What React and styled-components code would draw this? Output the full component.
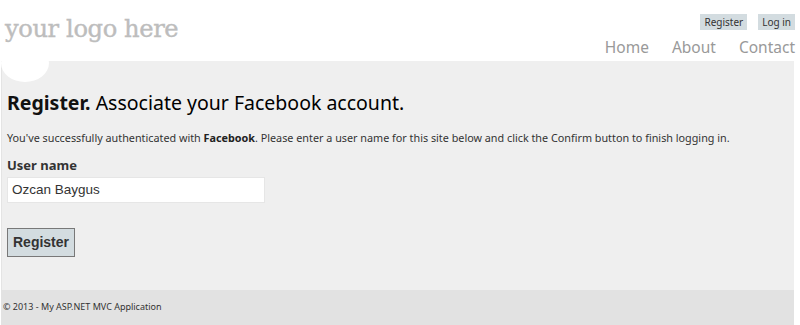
import styled, { createGlobalStyle } from "styled-components";

const GlobalStyle = createGlobalStyle`
  html, body {
    margin: 0;
    padding: 0;
    background: #fff;
  }
  body {
    font-family: "Noto Sans", "Open Sans", sans-serif;
    color: #333;
  }
`;

const Page = styled.div`
  width: 800px;
  height: 325px;
  display: flex;
  flex-direction: column;
  overflow: hidden;
`;

const Header = styled.header`
  height: 61px;
  display: flex;
  justify-content: space-between;
  padding: 0 5px 0 5px;
  box-sizing: border-box;
`;

const Logo = styled.div`
  font-family: "DejaVu Serif", serif;
  font-size: 24.2px;
  color: #bdbdbd;
  padding-top: 15px;
  letter-spacing: -0.4px;
  -webkit-text-stroke: 0.4px #bdbdbd;
`;

const RightHead = styled.div`
  display: flex;
  flex-direction: column;
  align-items: flex-end;
  padding-top: 14px;
`;

const LoginRow = styled.div`
  display: flex;
  gap: 11px;
`;

const SmallLink = styled.span`
  background: #d3dce0;
  font-size: 10px;
  line-height: 16px;
  padding: 0 4px;
  color: #333;
`;

const Nav = styled.nav`
  display: flex;
  gap: 23px;
  margin-top: 6px;
`;

const NavLink = styled.span`
  font-size: 15.5px;
  color: #999;
`;

const Main = styled.main`
  position: relative;
  flex: 1;
  background: #efefef;
  margin: 0 6px 0 1px;
  border-left: 1px solid #e4e4e4;
  padding: 26px 6px 0 5px;
`;

const Circle = styled.div`
  position: absolute;
  left: -1px;
  top: -17px;
  width: 48px;
  height: 38px;
  border-radius: 50%;
  background: #fff;
`;

const Title = styled.h1`
  margin: 0;
  font-size: 19.5px;
  font-weight: normal;
  color: #000;
  line-height: 32px;
  b {
    font-weight: bold;
    color: #111;
  }
`;

const Info = styled.p`
  margin: 11px 0 0 0;
  font-size: 10.8px;
  color: #333;
  b {
    color: #222;
  }
`;

const Label = styled.label`
  display: block;
  margin-top: 11px;
  font-size: 13px;
  font-weight: bold;
  color: #333;
`;

const Input = styled.div`
  margin-top: 3px;
  width: 252px;
  height: 24px;
  background: #fff;
  font-family: "Liberation Sans", Arial, sans-serif;
  font-size: 13.5px;
  color: #333;
  padding-left: 4px;
  line-height: 24px;
  border: 1px solid #e6e6e6;
`;

const Button = styled.div`
  margin-top: 25px;
  display: inline-block;
  background: #d3dce0;
  border: 1px solid #787878;
  font-family: "Liberation Sans", Arial, sans-serif;
  font-size: 14px;
  font-weight: bold;
  color: #333;
  padding: 0 5px;
  line-height: 27px;
`;

const Footer = styled.footer`
  height: 35px;
  background: #e2e2e2;
  margin: 0 6px 0 1px;
  display: flex;
  align-items: center;
  padding: 0 0 3px 2px;
  box-sizing: border-box;
  font-size: 9px;
  color: #333;
`;

const App = () => {
  return (
    <>
      <GlobalStyle />
      <Page>
        <Header>
          <Logo>your logo here</Logo>
          <RightHead>
            <LoginRow>
              <SmallLink>Register</SmallLink>
              <SmallLink>Log in</SmallLink>
            </LoginRow>
            <Nav>
              <NavLink>Home</NavLink>
              <NavLink>About</NavLink>
              <NavLink>Contact</NavLink>
            </Nav>
          </RightHead>
        </Header>
        <Main>
          <Circle />
          <Title>
            <b>Register.</b> Associate your Facebook account.
          </Title>
          <Info>
            You've successfully authenticated with <b>Facebook</b>. Please enter a
            user name for this site below and click the Confirm button to finish
            logging in.
          </Info>
          <Label>User name</Label>
          <Input>Ozcan Baygus</Input>
          <Button>Register</Button>
        </Main>
        <Footer>© 2013 - My ASP.NET MVC Application</Footer>
      </Page>
    </>
  );
};

export default App;
